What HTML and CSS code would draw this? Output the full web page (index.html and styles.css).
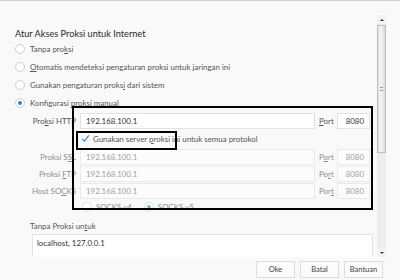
FILE: index.html
```html
<!DOCTYPE html>
<html>
<head>
<meta charset="utf-8">
<link rel="stylesheet" href="styles.css">
</head>
<body>
<div class="dialog">
  <div class="scroller">
    <div class="main">
      <h1 class="title">Atur Akses Proksi untuk Internet</h1>
      <div class="radios">
        <div class="radio-row"><span class="radio"></span><span>Tanpa pro<u>k</u>si</span></div>
        <div class="radio-row"><span class="radio"></span><span><u>O</u>tomatis mendeteksi pengaturan proksi untuk jaringan ini</span></div>
        <div class="radio-row"><span class="radio"></span><span>Gunakan pengaturan proks<u>i</u> dari sistem</span></div>
        <div class="radio-row"><span class="radio checked"></span><span>Konfigurasi <u>p</u>roksi manual</span></div>
      </div>
      <div class="manual">
        <span class="lbl">Pro<u>k</u>si HTTP</span>
        <span class="field">192.168.100.1</span>
        <span class="plbl"><u>P</u>ort</span>
        <span class="pfield">8080</span>

        <div class="check-row">
          <span class="check"><svg width="9" height="9" viewBox="0 0 9 9"><path d="M1.2 4.8 L3.4 7.2 L7.8 1.4" fill="none" stroke="#2a8ad8" stroke-width="1.1"/></svg></span>
          <span>Gunakan server <u>p</u>roksi ini untuk semua protokol</span>
        </div>

        <span class="lbl dim">Proksi S<u>S</u>L</span>
        <span class="field off">192.168.100.1</span>
        <span class="plbl dim">P<u>o</u>rt</span>
        <span class="pfield off">8080</span>

        <span class="lbl dim">Proksi <u>F</u>TP</span>
        <span class="field off">192.168.100.1</span>
        <span class="plbl dim">Po<u>r</u>t</span>
        <span class="pfield off">8080</span>

        <span class="lbl dim">Host SO<u>C</u>KS</span>
        <span class="field off">192.168.100.1</span>
        <span class="plbl dim">Por<u>t</u></span>
        <span class="pfield off">8080</span>

        <div class="socks-row">
          <span class="radio"></span><span class="dim">SOCKS v4</span>
          <span class="radio checked dimdot"></span><span class="dim">SOCKS v5</span>
        </div>
      </div>
      <div class="noproxy-label">Tanpa Proksi un<u>t</u>uk</div>
      <div class="textarea">localhost, 127.0.0.1</div>

      <div class="mark mark-big"></div>
      <div class="mark mark-small"></div>
    </div>
    <div class="scrollbar">
      <div class="sb-btn up"><span class="arrow-up"></span></div>
      <div class="sb-track">
        <div class="sb-thumb"><span class="grip"></span></div>
      </div>
      <div class="sb-btn down"><span class="arrow-down"></span></div>
    </div>
  </div>
  <div class="footer">
    <button class="btn">Oke</button>
    <button class="btn">Batal</button>
    <button class="btn">Bantuan</button>
  </div>
</div>
</body>
</html>
```
FILE: styles.css
```css
html, body {
  margin: 0;
  padding: 0;
  background: #f9f9f9;
}
.dialog {
  width: 400px;
  height: 280px;
  box-sizing: border-box;
  border-top: 1px solid #d2d2d2;
  background: #f9f9f9;
  font-family: Lato, "Noto Sans", sans-serif;
  font-size: 7.9px;
  color: #555;
  display: flex;
  flex-direction: column;
  overflow: hidden;
}
u { text-decoration: underline; text-underline-offset: 1px; }
.scroller {
  height: 256px;
  display: flex;
  flex-direction: row;
  overflow: hidden;
}
.main {
  position: relative;
  width: 377px;
  padding-left: 15px;
  box-sizing: border-box;
}
.title {
  margin: 26px 0 0 0;
  font-size: 9.2px;
  font-weight: normal;
  color: #2a2a2a;
  height: 13px;
  line-height: 13px;
}
.radio-row {
  height: 18px;
  display: flex;
  align-items: center;
  gap: 5px;
}
.radio {
  width: 10px;
  height: 10px;
  box-sizing: border-box;
  border: 1px solid #cfcfcf;
  border-radius: 50%;
  background: #fff;
  position: relative;
  flex: none;
}
.radio.checked::after {
  content: "";
  position: absolute;
  left: 2px;
  top: 2px;
  width: 4px;
  height: 4px;
  border-radius: 50%;
  background: #1b86d6;
}
.radio.dimdot::after { background: #7db6e4; }
.manual {
  display: grid;
  grid-template-columns: 47px 235px 16px 33px;
  column-gap: 3px;
  align-items: center;
  margin-left: 15px;
}
.lbl {
  text-align: right;
  white-space: nowrap;
  padding-right: 1px;
}
.dim { color: #8d8d8d; }
.field, .pfield {
  height: 16px;
  box-sizing: border-box;
  border: 1px solid #e2e2e2;
  background: #fff;
  line-height: 14px;
  padding-left: 5px;
  color: #333;
  margin: 0.5px 0;
}
.pfield {
  text-align: right;
  padding-right: 5px;
  padding-left: 0;
}
.field.off, .pfield.off {
  color: #a0a0a0;
  background: #fcfcfc;
  border-color: #e9e9e9;
}
.plbl { padding-left: 1px; white-space: nowrap; }
.check-row {
  grid-column: 2 / 5;
  height: 19px;
  display: flex;
  align-items: center;
  gap: 3px;
  padding-left: 1px;
}
.check {
  width: 9px;
  height: 9px;
  display: flex;
}
.socks-row {
  grid-column: 2 / 5;
  height: 16px;
  display: flex;
  align-items: center;
  gap: 4px;
  padding-left: 2px;
}
.socks-row .radio { width: 10px; height: 10px; border-color: #e0e0e0; }
.socks-row span.dim + .radio { margin-left: 8px; }
.noproxy-label {
  margin-top: 4px;
  height: 14px;
  line-height: 14px;
  margin-left: 15px;
}
.textarea {
  margin-top: 1px;
  margin-left: 17px;
  width: 341px;
  height: 40px;
  box-sizing: border-box;
  border: 1px solid #e2e2e2;
  background: #fff;
  padding: 2px 4px;
  line-height: 12px;
  color: #333;
}
.mark {
  position: absolute;
  border: 2px solid #000;
  box-sizing: border-box;
}
.mark-big {
  left: 72px;
  top: 105px;
  width: 301px;
  height: 104px;
}
.mark-small {
  left: 76px;
  top: 130px;
  width: 101px;
  height: 19px;
}
.scrollbar {
  margin-top: 14px;
  width: 9px;
  height: 242px;
  display: flex;
  flex-direction: column;
  background: #efefef;
}
.sb-btn {
  height: 9px;
  display: flex;
  align-items: center;
  justify-content: center;
  background: #f3f3f3;
}
.arrow-up {
  width: 0; height: 0;
  border-left: 2px solid transparent;
  border-right: 2px solid transparent;
  border-bottom: 2px solid #333;
}
.arrow-down {
  width: 0; height: 0;
  border-left: 2px solid transparent;
  border-right: 2px solid transparent;
  border-top: 2px solid #333;
}
.sb-track {
  flex: 1;
  background: #ededed;
}
.sb-thumb {
  margin-top: 1px;
  height: 128px;
  box-sizing: border-box;
  border: 1px solid #bdbdbd;
  background: linear-gradient(to right, #e2e2e2, #f6f6f6 45%, #d8d8d8);
  display: flex;
  align-items: center;
  justify-content: center;
}
.grip {
  width: 3px;
  height: 4px;
  border-top: 1px solid #999;
  border-bottom: 1px solid #999;
  box-sizing: border-box;
}
.footer {
  flex: 1;
  display: flex;
  justify-content: flex-end;
  align-items: flex-start;
  gap: 5px;
  padding: 4px 17px 0 0;
}
.btn {
  width: 39px;
  height: 17px;
  box-sizing: border-box;
  border: 1px solid #dcdcdc;
  background: #fbfbfb;
  font-family: Lato, "Noto Sans", sans-serif;
  font-size: 7.5px;
  color: #444;
  padding: 0;
}
```
